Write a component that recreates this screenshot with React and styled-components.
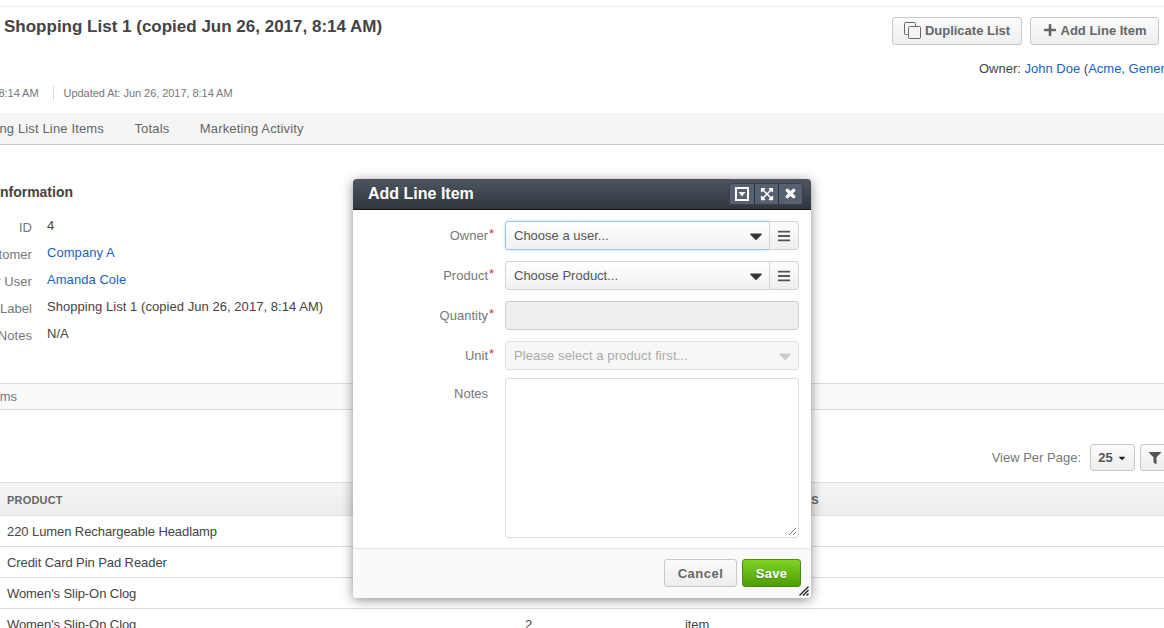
import styled, { createGlobalStyle } from 'styled-components'
import { FaBars, FaCaretDown, FaExpandArrowsAlt, FaFilter, FaPlus, FaTimes } from 'react-icons/fa'

const GlobalStyle = createGlobalStyle`
    html, body {
        margin: 0;
        padding: 0;
        background: #fff;
        overflow: hidden;
    }
    * {
        box-sizing: border-box;
    }
`

const Viewport = styled.div`
    position: relative;
    width: 1164px;
    height: 628px;
    overflow: hidden;
    font-family: "Liberation Sans", Arial, sans-serif;
    font-size: 13px;
    color: #444;
`

// the page is scrolled sideways in the shot, so it starts left of the window
const Page = styled.div`
    width: 1300px;
    margin-left: -60px;
    padding-top: 6px;
`

const TopLine = styled.div`
    height: 1px;
    background: #eee;
`

const Head = styled.div`
    display: flex;
    justify-content: space-between;
    height: 106px;
    padding-left: 64px;
    padding-right: 5px;
`

const HeadLeft = styled.div`
    display: flex;
    flex-direction: column;
`

const Title = styled.h1`
    margin: 10px 0 0;
    font-size: 17px;
    line-height: 20px;
    font-weight: 700;
    color: #444;
`

const Meta = styled.div`
    display: flex;
    align-items: center;
    margin: 49px 0 0 -142px;
    font-size: 11px;
    line-height: 15px;
    letter-spacing: -0.05px;
    color: #777;
`

const MetaItem = styled.span`
    padding: 0 14px 0 10px;
    & + & {
        border-left: 1px solid #ddd;
    }
`

const HeadRight = styled.div`
    width: 412px;
    overflow: hidden;
`

const Actions = styled.div`
    display: flex;
    justify-content: flex-end;
    gap: 8px;
    margin-top: 10px;
    margin-right: 76px;
`

const Button = styled.button`
    display: flex;
    align-items: center;
    justify-content: center;
    gap: 4px;
    width: ${(p) => p.$w}px;
    height: 28px;
    padding: 0 0 ${(p) => p.$lift ?? 0}px;
    border: 1px solid #c8c8c8;
    border-radius: 3px;
    background: linear-gradient(#fbfbfb, #eee);
    font: 700 13px "Liberation Sans", Arial, sans-serif;
    color: #666;
`

const OwnerLine = styled.div`
    margin-top: 16px;
    padding-left: 156px;
    line-height: 15px;
    white-space: nowrap;
    color: #444;
`

const Link = styled.a`
    color: #1b61c4;
`

const Tabs = styled.nav`
    display: flex;
    align-items: center;
    gap: 30.5px;
    height: 32px;
    background: #f5f5f5;
    border-bottom: 1px solid #c9c9c9;
    letter-spacing: 0.15px;
    color: #666;
`

const Tab = styled.span`
    &:first-child {
        margin-left: 18px;
    }
`

const Section = styled.section`
    height: 238px;
    padding-top: 38px;
`

const SectionTitle = styled.h2`
    margin: 0 0 16px;
    font-size: 14px;
    line-height: 18px;
    font-weight: 700;
    color: #444;
`

const InfoRow = styled.div`
    display: grid;
    grid-template-columns: 92px 1fr;
    column-gap: 15px;
    height: 27px;
    line-height: 17px;
    letter-spacing: 0.05px;
`

const InfoLabel = styled.span`
    text-align: right;
    color: #777;
    padding-top: 2px;
`

const SectionBar = styled.div`
    height: 27px;
    padding-left: 17px;
    line-height: 26px;
    background: #fafafa;
    border-top: 1px solid #ddd;
    border-bottom: 1px solid #ddd;
    color: #777;
`

const Toolbar = styled.div`
    display: flex;
    align-items: flex-start;
    justify-content: flex-end;
    height: 72px;
    padding: 34px 70px 0 0;
    gap: 5px;
    color: #777;
`

const PerPage = styled.span`
    margin-right: 4px;
    line-height: 28px;
`

const SmallButton = styled.button`
    display: flex;
    align-items: center;
    justify-content: center;
    gap: 4px;
    flex: none;
    width: ${(p) => p.$w}px;
    height: 27px;
    padding: 0;
    border: 1px solid #c8c8c8;
    border-radius: 3px;
    background: linear-gradient(#fbfbfb, #eee);
    font: 700 13px "Liberation Sans", Arial, sans-serif;
    color: #555;
`

const TableRow = styled.div`
    display: grid;
    grid-template-columns: 518px 160px 95px 1fr;
    height: 31px;
    padding-left: 67px;
    align-items: center;
    border-bottom: 1px solid #ddd;
    letter-spacing: -0.08px;
`

const TableHead = styled(TableRow)`
    height: 34px;
    padding-top: 2px;
    border-top: 1px solid #ddd;
    background: linear-gradient(#f6f6f6, #ececec);
    font-size: 11px;
    font-weight: 700;
    letter-spacing: 0.2px;
    color: #666;
`

const Dialog = styled.div`
    position: absolute;
    left: 353px;
    top: 179px;
    width: 458px;
    height: 419px;
    display: flex;
    flex-direction: column;
    background: #fff;
    border-radius: 4px;
    box-shadow: 0 2px 12px rgba(0, 0, 0, 0.45);
`

const DialogHeader = styled.div`
    display: flex;
    align-items: center;
    justify-content: space-between;
    flex: none;
    height: 31px;
    padding: 0 8px 1px 15px;
    border-radius: 4px 4px 0 0;
    border-bottom: 1px solid #14171a;
    background: linear-gradient(#4d5560, #30363d);
`

const DialogTitle = styled.span`
    font-size: 16px;
    font-weight: 700;
    color: #fff;
`

const WindowButtons = styled.div`
    display: flex;
    height: 22px;
    border-radius: 3px;
    overflow: hidden;
    background: #566070;
    border: 1px solid #3b424b;
`

const WindowButton = styled.span`
    display: flex;
    align-items: center;
    justify-content: center;
    width: 24px;
    color: #fff;
    & + & {
        border-left: 1px solid #2f353c;
    }
`

const DialogBody = styled.div`
    flex: 1;
    padding: 11px 12px 0 0;
`

const FormRow = styled.div`
    display: grid;
    grid-template-columns: 135px 1fr;
    column-gap: 17px;
    margin-bottom: ${(p) => p.$gap ?? 11}px;
`

const FieldLabel = styled.label`
    text-align: right;
    line-height: 29px;
    padding-top: ${(p) => (p.$plain ? 1 : 0)}px;
    color: #777;
    white-space: nowrap;
`

const Required = styled.em`
    position: absolute;
    margin-left: 1px;
    margin-top: -2px;
    font-style: normal;
    color: #c8323c;
`

const SelectGroup = styled.div`
    display: flex;
    height: 29px;
`

const Select = styled.div`
    flex: 1;
    display: flex;
    align-items: center;
    justify-content: space-between;
    padding: 0 3px 0 8px;
    border: 1px solid ${(p) => (p.$focus ? '#9dc3e6' : '#d4d4d4')};
    border-radius: 3px 0 0 3px;
    background: linear-gradient(#fff, #f1f1f1);
    box-shadow: ${(p) => (p.$focus ? '0 0 3px rgba(80, 150, 220, 0.35)' : 'none')};
    color: #555;
`

const ListButton = styled.div`
    display: flex;
    align-items: center;
    justify-content: center;
    width: 30px;
    margin-left: -1px;
    border: 1px solid #d4d4d4;
    border-radius: 0 3px 3px 0;
    background: linear-gradient(#fbfbfb, #efefef);
    font-size: 14px;
    color: #555;
`

const DisabledInput = styled.div`
    height: 29px;
    border: 1px solid #ccc;
    border-radius: 3px;
    background: #eee;
`

const DisabledSelect = styled.div`
    display: flex;
    align-items: center;
    justify-content: space-between;
    height: 29px;
    padding: 0 3px 0 8px;
    border: 1px solid #e0e0e0;
    border-radius: 3px;
    background: #f7f7f7;
    letter-spacing: 0.1px;
    color: #aaa;
`

const Notes = styled.div`
    position: relative;
    height: 160px;
    border: 1px solid #ddd;
    border-radius: 3px;
    background: #fff;
`

const TextGrip = styled.svg`
    position: absolute;
    right: 1px;
    bottom: 1px;
`

const DialogFooter = styled.div`
    position: relative;
    display: flex;
    justify-content: flex-end;
    align-items: flex-start;
    gap: 5px;
    flex: none;
    height: 50px;
    padding: 10px 10px 0 0;
    border-top: 1px solid #e4e4e4;
    border-radius: 0 0 4px 4px;
    background: #fafafa;
`

const CancelButton = styled(Button)`
    width: 73px;
    letter-spacing: 0.5px;
`

const SaveButton = styled(Button)`
    width: 59px;
    letter-spacing: 0.3px;
    border-color: #4a8a12;
    background: linear-gradient(#7ed321, #4f9e08);
    color: #fff;
    text-shadow: 0 1px 1px rgba(0, 0, 0, 0.25);
`

const DialogGrip = styled.svg`
    position: absolute;
    right: 2px;
    bottom: 2px;
`

const CopyIcon = () => (
    <svg width="17" height="17" viewBox="0 0 17 17" fill="none" stroke="#666" strokeWidth="1">
        <path d="M3.5 12.5 H1.5 Q0.5 12.5 0.5 11.5 V1.5 Q0.5 0.5 1.5 0.5 H10.5 Q11.5 0.5 11.5 1.5 V4.5" />
        <rect x="4.5" y="4.5" width="12" height="12" rx="1" />
    </svg>
)

const MinimizeIcon = () => (
    <svg width="14" height="14" viewBox="0 0 14 14">
        <rect x="1" y="1" width="12" height="12" fill="none" stroke="#fff" strokeWidth="2" />
        <path d="M3.5 5 H10.5 L7 9.5 Z" fill="#fff" />
    </svg>
)

const Field = ({ label, required, children, gap }) => (
    <FormRow $gap={gap}>
        <FieldLabel $plain={!required}>
            {label}
            {required && <Required>*</Required>}
        </FieldLabel>
        {children}
    </FormRow>
)

const infoRows = [
    ['ID', '4', true],
    ['Customer', 'Company A', false],
    ['Customer User', 'Amanda Cole', false],
    ['Label', 'Shopping List 1 (copied Jun 26, 2017, 8:14 AM)', true],
    ['Notes', 'N/A', true],
]

const lineItems = [
    ['220 Lumen Rechargeable Headlamp', '1', 'item'],
    ['Credit Card Pin Pad Reader', '1', 'item'],
    ["Women's Slip-On Clog", '1', 'item'],
    ["Women's Slip-On Clog", '2', 'item'],
]

export default function App() {
    return (
        <Viewport>
            <GlobalStyle />
            <Page>
                <TopLine />
                <Head>
                    <HeadLeft>
                        <Title>Shopping List 1 (copied Jun 26, 2017, 8:14 AM)</Title>
                        <Meta>
                            <MetaItem>Created At: Jun 26, 2017, 8:14 AM</MetaItem>
                            <MetaItem>Updated At: Jun 26, 2017, 8:14 AM</MetaItem>
                        </Meta>
                    </HeadLeft>
                    <HeadRight>
                        <Actions>
                            <Button $w={130} $lift={2}><CopyIcon /> Duplicate List</Button>
                            <Button $w={129} $lift={2}><FaPlus size={14} /> Add Line Item</Button>
                        </Actions>
                        <OwnerLine>
                            Owner: <Link>John Doe</Link> (<Link>Acme, General</Link>)
                        </OwnerLine>
                    </HeadRight>
                </Head>
                <Tabs>
                    <Tab>Shopping List Line Items</Tab>
                    <Tab>Totals</Tab>
                    <Tab>Marketing Activity</Tab>
                </Tabs>
                <Section>
                    <SectionTitle>General Information</SectionTitle>
                    {infoRows.map(([label, value, plain]) => (
                        <InfoRow key={label}>
                            <InfoLabel>{label}</InfoLabel>
                            {plain ? <span>{value}</span> : <Link>{value}</Link>}
                        </InfoRow>
                    ))}
                </Section>
                <SectionBar>Line Items</SectionBar>
                <Toolbar>
                    <PerPage>View Per Page:</PerPage>
                    <SmallButton $w={45}>25 <FaCaretDown size={10} color="#222" /></SmallButton>
                    <SmallButton $w={30}><FaFilter size={12} /></SmallButton>
                </Toolbar>
                <TableHead>
                    <span>PRODUCT</span>
                    <span>QUANTITY</span>
                    <span>UNIT</span>
                    <span>NOTES</span>
                </TableHead>
                {lineItems.map(([name, qty, unit], i) => (
                    <TableRow key={i}>
                        <span>{name}</span>
                        <span>{qty}</span>
                        <span>{unit}</span>
                    </TableRow>
                ))}
            </Page>

            <Dialog>
                <DialogHeader>
                    <DialogTitle>Add Line Item</DialogTitle>
                    <WindowButtons>
                        <WindowButton><MinimizeIcon /></WindowButton>
                        <WindowButton><FaExpandArrowsAlt size={14} /></WindowButton>
                        <WindowButton><FaTimes size={13} stroke="currentColor" strokeWidth={40} /></WindowButton>
                    </WindowButtons>
                </DialogHeader>
                <DialogBody>
                    <Field label="Owner" required>
                        <SelectGroup>
                            <Select $focus>Choose a user... <FaCaretDown size={20} color="#333" /></Select>
                            <ListButton><FaBars /></ListButton>
                        </SelectGroup>
                    </Field>
                    <Field label="Product" required>
                        <SelectGroup>
                            <Select>Choose Product... <FaCaretDown size={20} color="#333" /></Select>
                            <ListButton><FaBars /></ListButton>
                        </SelectGroup>
                    </Field>
                    <Field label="Quantity" required>
                        <DisabledInput />
                    </Field>
                    <Field label="Unit" required gap={8}>
                        <DisabledSelect>
                            Please select a product first... <FaCaretDown size={20} color="#ccc" />
                        </DisabledSelect>
                    </Field>
                    <Field label="Notes" gap={0}>
                        <Notes>
                            <TextGrip width="9" height="9" viewBox="0 0 9 9" stroke="#777" strokeWidth="1">
                                <path d="M1 8 L8 1 M5 8 L8 5" />
                            </TextGrip>
                        </Notes>
                    </Field>
                </DialogBody>
                <DialogFooter>
                    <CancelButton>Cancel</CancelButton>
                    <SaveButton>Save</SaveButton>
                    <DialogGrip width="10" height="10" viewBox="0 0 10 10" stroke="#222" strokeWidth="1.4">
                        <path d="M0.5 9.5 L9.5 0.5 M4 9.5 L9.5 4 M7.5 9.5 L9.5 7.5" />
                    </DialogGrip>
                </DialogFooter>
            </Dialog>
        </Viewport>
    )
}
